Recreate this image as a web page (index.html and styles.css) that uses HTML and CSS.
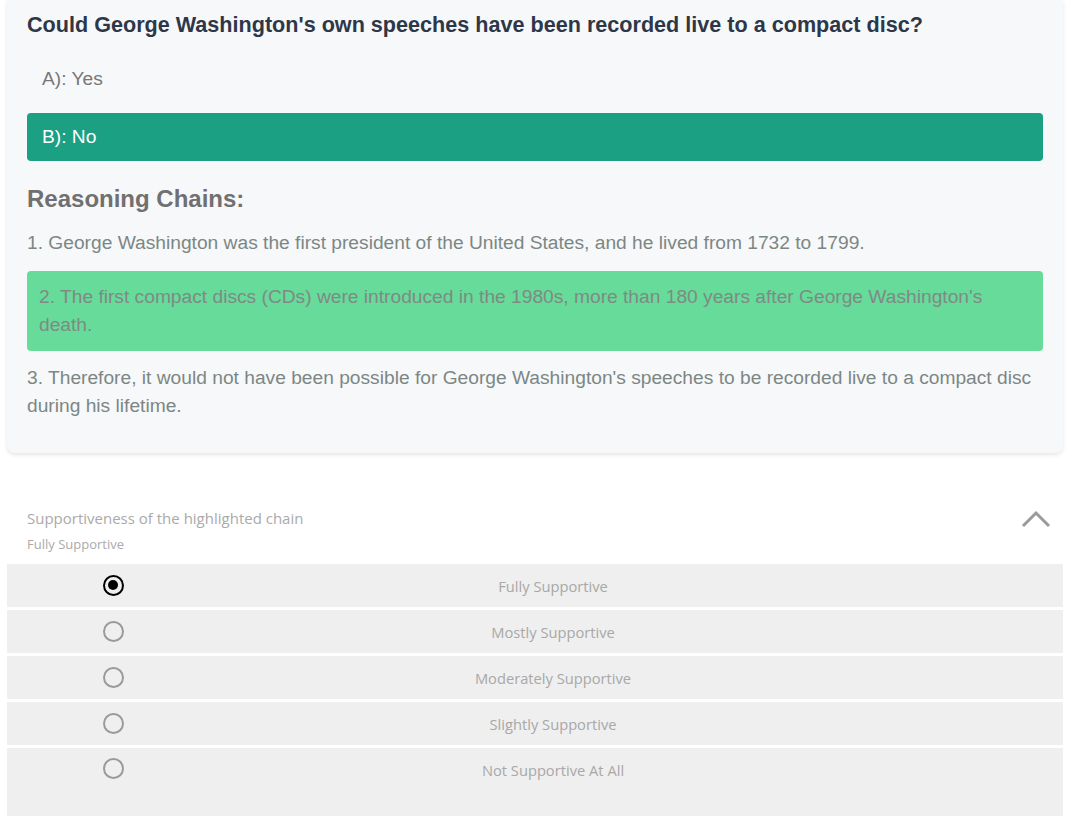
FILE: index.html
```html
<!DOCTYPE html>
<html>
<head>
<meta charset="utf-8">
<link rel="stylesheet" href="styles.css">
</head>
<body>
<div class="page">
  <div class="card">
    <h2 class="question">Could George Washington's own speeches have been recorded live to a compact disc?</h2>
    <div class="option">A): Yes</div>
    <div class="option selected">B): No</div>
    <h3 class="chains-title">Reasoning Chains:</h3>
    <div class="chain">1. George Washington was the first president of the United States, and he lived from 1732 to 1799.</div>
    <div class="chain highlight">2. The first compact discs (CDs) were introduced in the 1980s, more than 180 years after George Washington's death.</div>
    <div class="chain">3. Therefore, it would not have been possible for George Washington's speeches to be recorded live to a compact disc during his lifetime.</div>
  </div>

  <div class="rating">
    <div class="rating-head">
      <div class="rating-labels">
        <div class="rating-title">Supportiveness of the highlighted chain</div>
        <div class="rating-value">Fully Supportive</div>
      </div>
      <svg class="chevron" width="30" height="18" viewBox="0 0 30 18"><polyline points="2,16 15,3 28,16" fill="none" stroke="#9a9a9a" stroke-width="3"/></svg>
    </div>
    <div class="choices">
      <div class="choice"><span class="radio checked"></span><span class="choice-label">Fully Supportive</span></div>
      <div class="choice"><span class="radio"></span><span class="choice-label">Mostly Supportive</span></div>
      <div class="choice"><span class="radio"></span><span class="choice-label">Moderately Supportive</span></div>
      <div class="choice"><span class="radio"></span><span class="choice-label">Slightly Supportive</span></div>
      <div class="choice last"><span class="radio"></span><span class="choice-label">Not Supportive At All</span></div>
    </div>
  </div>
</div>
</body>
</html>
```

FILE: styles.css
```css
* { box-sizing: border-box; }
html, body { margin: 0; padding: 0; background: #ffffff; }
body { font-family: "Liberation Sans", Arial, sans-serif; }

.page {
  width: 1056px;
  margin-left: 7px;
}

.card {
  background: #f7f8fa;
  border-radius: 0 0 8px 8px;
  box-shadow: 0 2px 4px rgba(0, 0, 0, 0.10);
  padding: 9px 20px 33px 20px;
}

.question {
  margin: 0 0 14px 0;
  font-size: 21.6px;
  line-height: 32px;
  font-weight: bold;
  color: #2d3748;
}

.option {
  height: 48px;
  line-height: 48px;
  padding: 0 15px;
  font-size: 19.2px;
  color: #777777;
  border-radius: 4px;
  margin-bottom: 10px;
}
.option.selected {
  background: #1ba084;
  color: #ffffff;
}

.chains-title {
  margin: 23px 0 15px 0;
  font-size: 24px;
  line-height: 30px;
  font-weight: bold;
  color: #707070;
}

.chain {
  font-size: 19.2px;
  line-height: 28px;
  color: #7c8784;
  margin-bottom: 14px;
}
.chain:last-child { margin-bottom: 0; }
.chain.highlight {
  background: #67db99;
  padding: 12px 12px;
  border-radius: 4px;
  color: #7f8a85;
  margin-bottom: 13px;
}

.rating {
  margin-top: 55px;
  font-family: "Open Sans", "Liberation Sans", sans-serif;
}
.rating-head {
  display: flex;
  justify-content: space-between;
  align-items: flex-start;
  padding: 0 12px 0 20px;
}
.rating-title {
  font-size: 15px;
  line-height: 20px;
  color: #aaaaaa;
}
.rating-value {
  margin-top: 8px;
  font-size: 13px;
  line-height: 16px;
  color: #aaaaaa;
}
.chevron { margin-top: 2px; }

.choices {
  margin-top: 12px;
  display: flex;
  flex-direction: column;
  gap: 3px;
}
.choice {
  display: grid;
  grid-template-columns: 212px 1fr 176px;
  align-items: center;
  height: 43px;
  background: #efefef;
}
.choice.last {
  height: 68px;
  align-items: start;
  padding-top: 10px;
}
.choice.last .choice-label { margin-top: 2px; }
.radio {
  justify-self: center;
  width: 21px;
  height: 21px;
  border-radius: 50%;
  border: 2px solid #9a9a9a;
  position: relative;
}
.radio.checked { border: 2.5px solid #000000; }
.radio.checked::after {
  content: "";
  position: absolute;
  left: 3px; top: 3px;
  width: 10px; height: 10px;
  border-radius: 50%;
  background: #000000;
}
.choice-label {
  text-align: center;
  font-size: 14.7px;
  line-height: 20px;
  color: #a8a8a8;
}
```
